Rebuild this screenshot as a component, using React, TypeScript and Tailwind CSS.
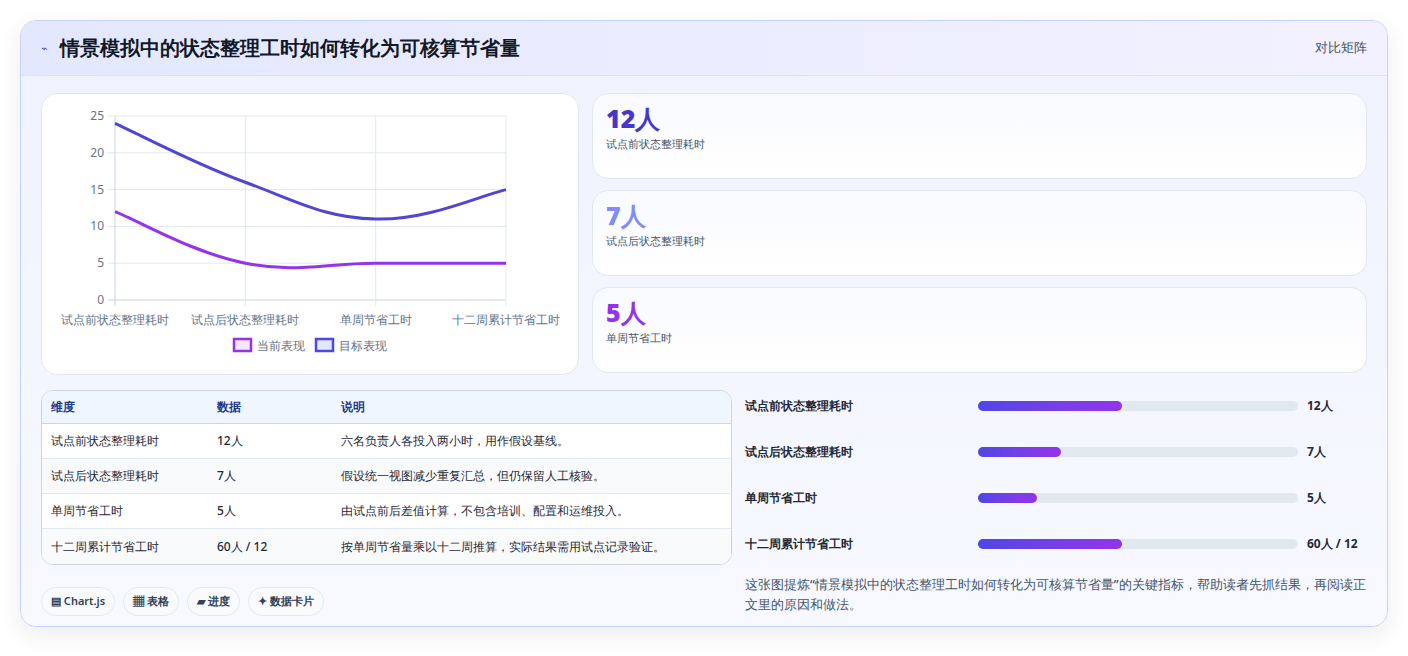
import React from "react";

type Pt = [number, number];

const xs = [73, 203.3, 333.7, 464];
const yOf = (v: number) => 206 - v * 7.36;

// smooth path similar to chart.js tension 0.4
function smoothPath(vals: number[]) {
  const pts: Pt[] = vals.map((v, i) => [xs[i], yOf(v)]);
  let d = `M${pts[0][0]},${pts[0][1]}`;
  const t = 0.4;
  for (let i = 0; i < pts.length - 1; i++) {
    const p0 = pts[i - 1] || pts[i];
    const p1 = pts[i];
    const p2 = pts[i + 1];
    const p3 = pts[i + 2] || p2;
    const c1: Pt = [p1[0] + ((p2[0] - p0[0]) * t) / 2, p1[1] + ((p2[1] - p0[1]) * t) / 2];
    const c2: Pt = [p2[0] - ((p3[0] - p1[0]) * t) / 2, p2[1] - ((p3[1] - p1[1]) * t) / 2];
    d += ` C${c1[0]},${c1[1]} ${c2[0]},${c2[1]} ${p2[0]},${p2[1]}`;
  }
  return d;
}

const cats = ["试点前状态整理耗时", "试点后状态整理耗时", "单周节省工时", "十二周累计节省工时"];

function Chart() {
  return (
    <svg width="538" height="281" className="block">
      {[0, 5, 10, 15, 20, 25].map((v) => (
        <g key={v}>
          <line x1={66} x2={464} y1={yOf(v)} y2={yOf(v)} stroke={v === 0 ? "#cbd5e1" : "#e2e8f0"} />
          <text x={62} y={yOf(v) + 4} textAnchor="end" fontSize="12" fill="#64748b">{v}</text>
        </g>
      ))}
      {xs.map((x, i) => (
        <g key={i}>
          <line x1={x} x2={x} y1={22} y2={212} stroke={i === 0 ? "#cbd5e1" : "#e2e8f0"} />
          <text x={x} y={230} textAnchor="middle" fontSize="12" fill="#64748b">{cats[i]}</text>
        </g>
      ))}
      <path d={smoothPath([24, 16, 11, 15])} fill="none" stroke="#5145d4" strokeWidth="3" />
      <path d={smoothPath([12, 5, 5, 5])} fill="none" stroke="#9333ea" strokeWidth="3" />
      <rect x={192} y={245} width={17} height={12} fill="#f3e8ff" stroke="#9333ea" strokeWidth="2.5" />
      <text x={215} y={256} fontSize="12" fill="#64748b">当前表现</text>
      <rect x={274} y={245} width={17} height={12} fill="#e0e7ff" stroke="#4f46e5" strokeWidth="2.5" />
      <text x={297} y={256} fontSize="12" fill="#64748b">目标表现</text>
    </svg>
  );
}

const stats = [
  { v: "12人", l: "试点前状态整理耗时", c: "text-[#4338ca]" },
  { v: "7人", l: "试点后状态整理耗时", c: "text-[#818cf8]" },
  { v: "5人", l: "单周节省工时", c: "text-[#9333ea]" },
];

const rows = [
  ["试点前状态整理耗时", "12人", "六名负责人各投入两小时，用作假设基线。"],
  ["试点后状态整理耗时", "7人", "假设统一视图减少重复汇总，但仍保留人工核验。"],
  ["单周节省工时", "5人", "由试点前后差值计算，不包含培训、配置和运维投入。"],
  ["十二周累计节省工时", "60人 / 12", "按单周节省量乘以十二周推算，实际结果需用试点记录验证。"],
];

const bars = [
  { l: "试点前状态整理耗时", w: 45, v: "12人" },
  { l: "试点后状态整理耗时", w: 26, v: "7人" },
  { l: "单周节省工时", w: 18.5, v: "5人" },
  { l: "十二周累计节省工时", w: 45, v: "60人 / 12" },
];

const chips = ["▤ Chart.js", "▦ 表格", "▰ 进度", "✦ 数据卡片"];

export default function App() {
  return (
    <div className="h-[656px] w-[1408px] bg-white px-5 py-5 font-['Noto_Sans_CJK_SC',sans-serif] text-slate-800">
      <div className="overflow-hidden rounded-2xl border border-[#c7d2fe] bg-[#f3f4ff] shadow-[0_8px_24px_rgba(15,23,42,0.08)]">
        <div className="flex h-[55px] items-center justify-between border-b border-[#dbe4f5] bg-gradient-to-r from-[#e3e8ff] to-[#f3f1ff] px-5">
          <div className="flex items-center gap-3">
            <span className="text-[11px] text-[#4f46e5]">⌁</span>
            <h1 className="text-[20px] font-black text-[#111827]">情景模拟中的状态整理工时如何转化为可核算节省量</h1>
          </div>
          <span className="text-[13px] text-slate-600">对比矩阵</span>
        </div>
        <div className="bg-gradient-to-b from-[#f0f3ff] to-[#f8f9ff] px-5 pb-[10px] pt-[17px]">
          <div className="flex gap-[13px]">
            <div className="h-[282px] w-[538px] rounded-2xl border border-[#e2e8f0] bg-white">
              <Chart />
            </div>
            <div className="flex flex-1 flex-col gap-[11px]">
              {stats.map((s) => (
                <div key={s.l} className="h-[86px] rounded-2xl border border-[#e2e8f0] bg-gradient-to-b from-[#f9faff] to-white px-[13px] pt-[6px]">
                  <div className={`text-[25px] font-black leading-[36px] ${s.c}`}>{s.v}</div>
                  <div className="text-[11px] text-slate-600">{s.l}</div>
                </div>
              ))}
            </div>
          </div>
          <div className="mt-[15px] flex gap-[13px]">
            <div className="w-[691px]">
              <div className="overflow-hidden rounded-xl border border-[#cbd5e1] bg-white text-[12px]">
                <div className="flex h-[33px] items-center border-b border-[#cbd5e1] bg-[#eff6ff] px-[9px] font-bold text-[#1e3a8a]">
                  <div className="w-[166px]">维度</div>
                  <div className="w-[124px]">数据</div>
                  <div>说明</div>
                </div>
                {rows.map((r, i) => (
                  <div key={i} className={`flex h-[35px] items-center px-[9px] font-medium text-[#1f2937] ${i < 3 ? "border-b border-[#e2e8f0]" : ""} ${i % 2 ? "bg-[#f8fafc]" : "bg-white"}`}>
                    <div className="w-[166px]">{r[0]}</div>
                    <div className="w-[124px]">{r[1]}</div>
                    <div>{r[2]}</div>
                  </div>
                ))}
              </div>
              <div className="mt-[22px] flex gap-2">
                {chips.map((c) => (
                  <span key={c} className="rounded-full border border-[#e2e8f0] bg-[#f8fafc] px-[9px] py-[5px] text-[11px] font-semibold text-slate-700">{c}</span>
                ))}
              </div>
            </div>
            <div className="-mt-[7px] flex-1">
              {bars.map((b) => (
                <div key={b.l} className="flex h-[46px] items-center">
                  <div className="w-[233px] text-[12px] font-bold text-[#1f2937]">{b.l}</div>
                  <div className="h-[10px] w-[320px] rounded-full bg-[#e2e8f0]">
                    <div className="h-full rounded-full bg-gradient-to-r from-[#4f46e5] to-[#9333ea]" style={{ width: `${b.w}%` }} />
                  </div>
                  <div className="ml-[9px] text-[12px] font-bold text-[#1f2937]">{b.v}</div>
                </div>
              ))}
              <p className="mt-[8px] text-[12.5px] font-medium leading-[20px] text-slate-600">
                这张图提炼“情景模拟中的状态整理工时如何转化为可核算节省量”的关键指标，帮助读者先抓结果，再阅读正文里的原因和做法。
              </p>
            </div>
          </div>
        </div>
      </div>
    </div>
  );
}
